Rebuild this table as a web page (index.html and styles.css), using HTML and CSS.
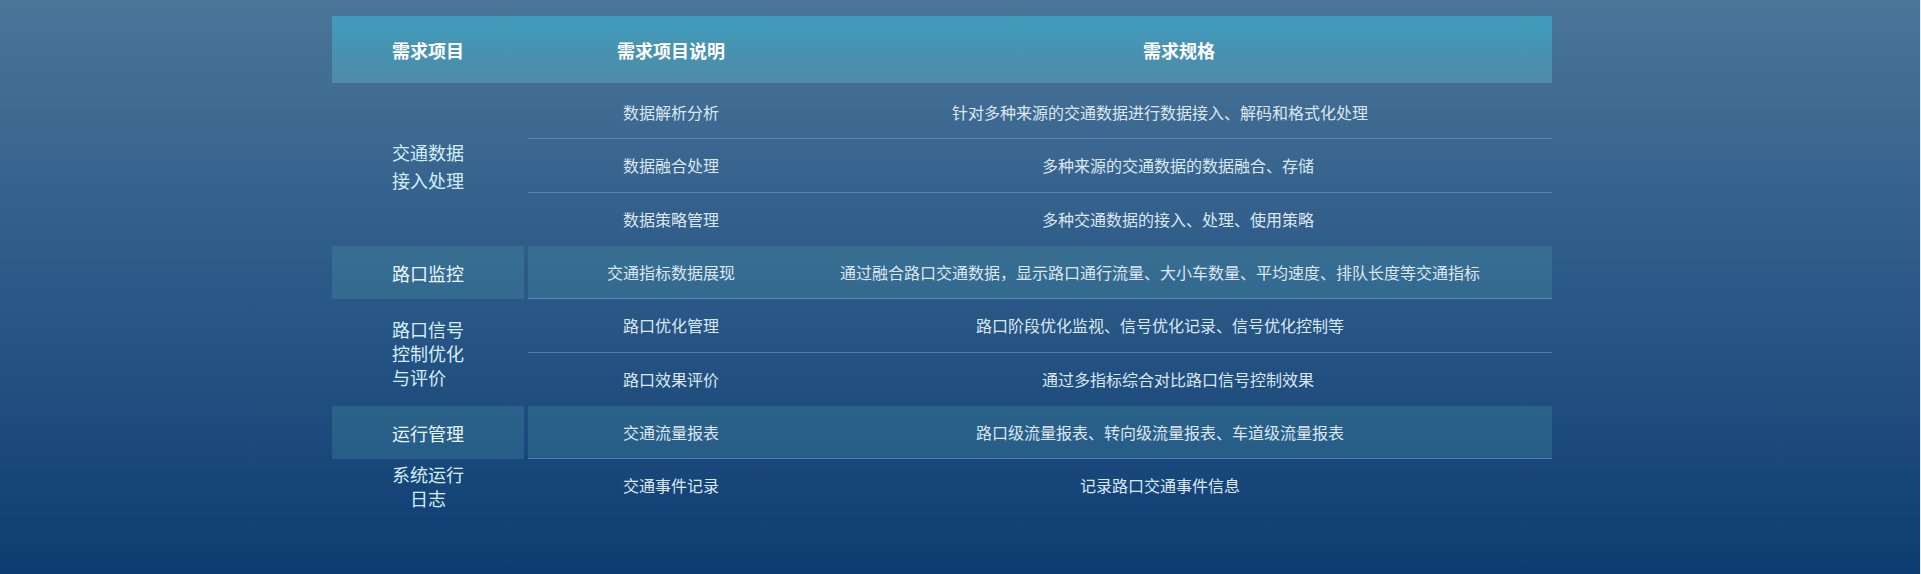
FILE: index.html
```html
<!DOCTYPE html>
<html lang="zh-CN">
<head>
<meta charset="utf-8">
<title>需求规格</title>
<link rel="stylesheet" href="styles.css">
</head>
<body>
<div class="page">
  <div class="table">
    <div class="thead">
      <div class="th c1">需求项目</div>
      <div class="th c2">需求项目说明</div>
      <div class="th c3">需求规格</div>
    </div>

    <div class="group">
      <div class="gname"><span class="lbl tall">交通数据<br>接入处理</span></div>
      <div class="subs">
        <div class="sub"><div class="c2">数据解析分析</div><div class="c3">针对多种来源的交通数据进行数据接入、解码和格式化处理</div></div>
        <div class="sub"><div class="c2">数据融合处理</div><div class="c3 off">多种来源的交通数据的数据融合、存储</div></div>
        <div class="sub last"><div class="c2">数据策略管理</div><div class="c3 off">多种交通数据的接入、处理、使用策略</div></div>
      </div>
    </div>

    <div class="group hl">
      <div class="gname"><span class="lbl">路口监控</span></div>
      <div class="subs">
        <div class="sub"><div class="c2">交通指标数据展现</div><div class="c3">通过融合路口交通数据，显示路口通行流量、大小车数量、平均速度、排队长度等交通指标</div></div>
      </div>
    </div>

    <div class="group">
      <div class="gname"><span class="lbl">路口信号控制优化与评价</span></div>
      <div class="subs">
        <div class="sub"><div class="c2">路口优化管理</div><div class="c3">路口阶段优化监视、信号优化记录、信号优化控制等</div></div>
        <div class="sub last"><div class="c2">路口效果评价</div><div class="c3 off">通过多指标综合对比路口信号控制效果</div></div>
      </div>
    </div>

    <div class="group hl">
      <div class="gname"><span class="lbl">运行管理</span></div>
      <div class="subs">
        <div class="sub"><div class="c2">交通流量报表</div><div class="c3">路口级流量报表、转向级流量报表、车道级流量报表</div></div>
      </div>
    </div>

    <div class="group">
      <div class="gname"><span class="lbl center">系统运行日志</span></div>
      <div class="subs">
        <div class="sub last"><div class="c2">交通事件记录</div><div class="c3">记录路口交通事件信息</div></div>
      </div>
    </div>
  </div>
</div>
</body>
</html>
```

FILE: styles.css
```css
html {
  background: #e9edf1;
}
body {
  margin: 0;
  font-family: "Noto Sans CJK SC", "Noto Sans", sans-serif;
}
.page {
  width: 1920px;
  height: 574px;
  background: linear-gradient(180deg, #4b7599 0%, #2e5c89 45%, #0d3c72 100%);
  padding-top: 16px;
  box-sizing: border-box;
  overflow: hidden;
}
.table {
  margin-left: 332px;
  width: 1220px;
}
.thead {
  height: 67px;
  display: grid;
  grid-template-columns: 192px 286px 1fr;
  column-gap: 4px;
  align-items: center;
  background: linear-gradient(180deg, #3f9cbc 0%, #4f8aa7 100%);
  margin-bottom: 3px;
}
.th {
  color: #ffffff;
  font-size: 18px;
  font-weight: 700;
  text-align: center;
  line-height: 24px;
}
.th.c3 {
  padding-right: 12px;
}
.group {
  display: flex;
  column-gap: 4px;
}
.gname {
  width: 192px;
  flex: none;
  display: flex;
  align-items: center;
  justify-content: center;
}
.lbl {
  display: block;
  width: 72px;
  font-size: 18px;
  line-height: 24px;
  color: #d3eef7;
  text-align: left;
  word-break: break-all;
}
.lbl.tall {
  line-height: 28px;
}
.lbl.center {
  text-align: center;
}
.subs {
  flex: 1;
  display: flex;
  flex-direction: column;
}
.sub {
  height: 53.33px;
  box-sizing: border-box;
  display: grid;
  grid-template-columns: 286px 1fr;
  align-items: center;
  border-bottom: 1px solid rgba(150, 190, 222, 0.38);
  font-size: 16px;
  line-height: 22px;
  color: #dbe7f0;
}
.sub.last {
  border-bottom-color: transparent;
}
.sub .c2 {
  text-align: center;
}
.sub .c3 {
  text-align: center;
  padding-right: 46px;
}
.sub .c3.off {
  padding-left: 36px;
}
.group.hl .gname,
.group.hl .sub {
  background: rgba(80, 160, 170, 0.25);
}
.group.hl .lbl {
  color: #e6f6fb;
}
```
